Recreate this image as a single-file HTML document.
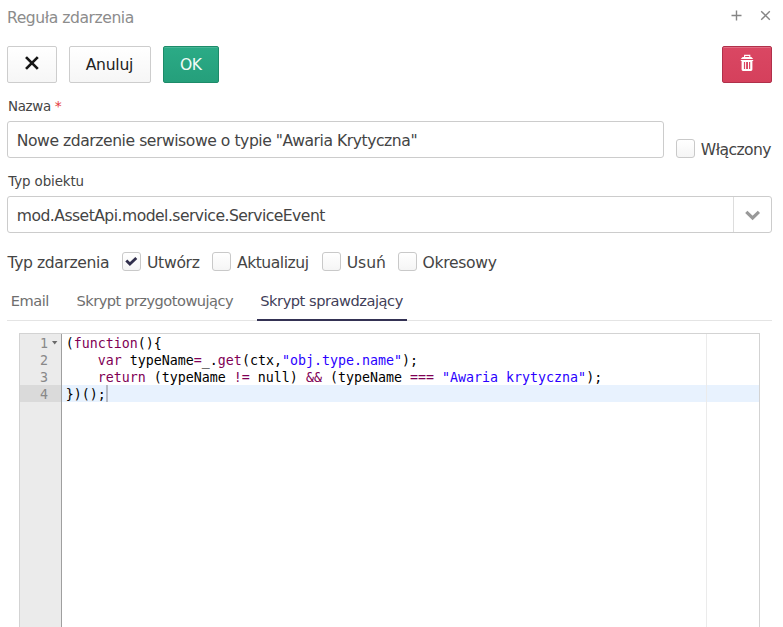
<!DOCTYPE html>
<html lang="pl">
<head>
<meta charset="utf-8">
<title>Reguła zdarzenia</title>
<style>
html,body{margin:0;padding:0;}
body{width:783px;height:627px;overflow:hidden;background:#fff;position:relative;font-family:"DejaVu Sans","Liberation Sans",sans-serif;color:#444;}
.abs{position:absolute;white-space:nowrap;}
.t{position:absolute;white-space:nowrap;line-height:20px;}
.btn{position:absolute;top:46px;height:35px;border:1px solid #cdcdcd;border-radius:2px;background:linear-gradient(#fff,#f6f6f6);}
.ok{background:linear-gradient(#2bab86,#259f7b);border-color:#1d8b69;box-shadow:inset 0 1px 0 rgba(255,255,255,.14);}
.del{background:linear-gradient(#da4763,#d5405c);border-color:#b0304a;box-shadow:inset 0 1px 0 rgba(255,255,255,.2);}
.inp{position:absolute;border:1px solid #ccc;border-radius:3px;background:#fff;box-sizing:border-box;}
.cb{position:absolute;width:17px;height:17px;border:1px solid #c9c9c9;border-radius:3px;background:linear-gradient(#fff,#f5f5f5);}
.ed{position:absolute;left:19px;top:333px;width:739px;height:300px;border:1px solid #d3d3d3;border-bottom:none;background:#fff;overflow:hidden;}
.gut{position:absolute;left:0;top:0;width:41px;height:100%;background:#ebebeb;border-right:1px solid #9f9f9f;}
.code{font-family:"DejaVu Sans Mono","Liberation Mono",monospace;font-size:13.3px;line-height:17px;color:#000;white-space:pre;}
.ln{position:absolute;left:0;width:28px;text-align:right;color:#888;}
.kw,.op{color:#7f0055;}.st{color:#2a00ff;}
</style>
</head>
<body>
<div id="title" class="t" style="left:7px;top:8.0px;font-size:15.6px;letter-spacing:-0.45px;color:#8c8c8c">Reguła zdarzenia</div>
<svg class="abs" style="left:730px;top:9px" width="44" height="14" viewBox="0 0 44 14"><path d="M6.500 1.500v10M1.500 6.500h10" stroke="#858585" stroke-width="1.400" fill="none"/><path d="M31.200 2.200l8.600 8.600M39.800 2.200l-8.600 8.600" stroke="#858585" stroke-width="1.350" fill="none"/></svg>

<div class="btn" style="left:7px;width:48px;"></div>
<svg class="abs" style="left:22px;top:53px" width="20" height="20" viewBox="22 53 20 20"><path d="M26 57.100l11.800 11.800M37.800 57.100l-11.800 11.800" stroke="#151515" stroke-width="2.700" fill="none"/></svg>
<div class="btn" style="left:69px;width:80px;"></div>
<div id="anuluj" class="t" style="left:85.7px;top:55.0px;font-size:15.6px;letter-spacing:-0.25px;color:#222">Anuluj</div>
<div class="btn ok" style="left:163px;width:54px;"></div>
<div id="ok" class="t" style="left:180.1px;top:55.0px;font-size:15.6px;letter-spacing:-0.6px;color:#f2fbf8">OK</div>
<div class="btn del" style="left:722px;width:48px;"></div>
<svg class="abs" style="left:738px;top:52px" width="18" height="22" viewBox="738 52 18 22"><path d="M744.600 57.200V55.400H749.800V57.200" stroke="#fff" stroke-width="1.100" fill="none"/><path d="M742.600 57h8.800l1.800 2h-12.400z" fill="#fff"/><path d="M740.800 60h12.400v1h-0.800v8.600a1.400 1.400 0 0 1 -1.400 1.400h-8a1.400 1.400 0 0 1 -1.400 -1.400v-8.600h-0.800z" fill="#fff"/><path d="M743.900 62h1.200v7h-1.200zM746.100 62h1.900v7h-1.900zM749 62h1.200v7h-1.200z" fill="#da4562"/></svg>

<div id="nazwa" class="t" style="left:8px;top:96.5px;font-size:13.4px;letter-spacing:-0.3px;color:#444">Nazwa</div>
<div class="t" id="star" style="left:54.7px;top:95.5px;font-size:14px;color:#e5393b">*</div>
<div class="inp" style="left:7px;top:121px;width:657px;height:37px;"></div>
<div id="input" class="t" style="left:16.8px;top:131.0px;font-size:15.6px;letter-spacing:-0.45px;color:#444">Nowe zdarzenie serwisowe o typie &quot;Awaria Krytyczna&quot;</div>
<div class="cb" style="left:676px;top:139px;"></div>
<div id="wlacz" class="t" style="left:700.8px;top:140.0px;font-size:15.6px;letter-spacing:-0.58px;color:#444">Włączony</div>

<div id="typob" class="t" style="left:8.2px;top:171.5px;font-size:13.4px;letter-spacing:-0.1px;color:#444">Typ obiektu</div>
<div class="inp" style="left:7px;top:196px;width:765px;height:37px;">
<div style="position:absolute;right:0;top:0;width:37px;height:100%;border-left:1px solid #ddd;"></div></div>
<svg class="abs" style="left:742px;top:206px" width="22" height="18" viewBox="742 206 22 18"><path d="M746.300 211.900L752.600 218L758.900 211.900" stroke="#999" stroke-width="3.200" fill="none"/></svg>
<div id="select" class="t" style="left:16.8px;top:206.0px;font-size:15.6px;letter-spacing:-0.53px;color:#444">mod.AssetApi.model.service.ServiceEvent</div>

<div id="typzd" class="t" style="left:7.5px;top:253.0px;font-size:15.6px;letter-spacing:-0.4px;color:#444">Typ zdarzenia</div>
<div class="cb" style="left:122px;top:252px;"></div>
<svg class="abs" style="left:122px;top:252px" width="19" height="19" viewBox="122 252 19 19"><path d="M126.300 260.500l3.600 3.600L136.300 258" stroke="#312f4c" stroke-width="2.800" fill="none"/></svg>
<div id="utw" class="t" style="left:147px;top:253.0px;font-size:15.6px;letter-spacing:-0.3px;color:#444">Utwórz</div>
<div class="cb" style="left:212px;top:252px;"></div>
<div id="akt" class="t" style="left:237px;top:253.0px;font-size:15.6px;letter-spacing:-0.48px;color:#444">Aktualizuj</div>
<div class="cb" style="left:322px;top:252px;"></div>
<div id="usun" class="t" style="left:346.8px;top:253.0px;font-size:15.6px;letter-spacing:-0.1px;color:#444">Usuń</div>
<div class="cb" style="left:398px;top:252px;"></div>
<div id="okr" class="t" style="left:422.5px;top:253.0px;font-size:15.6px;letter-spacing:-0.3px;color:#444">Okresowy</div>

<div id="email" class="t" style="left:10.8px;top:290.5px;font-size:14.6px;letter-spacing:-0.5px;color:#6e6e6e">Email</div>
<div id="przyg" class="t" style="left:76.5px;top:290.5px;font-size:14.6px;letter-spacing:-0.5px;color:#6e6e6e">Skrypt przygotowujący</div>
<div id="spr" class="t" style="left:260.3px;top:290.5px;font-size:14.6px;letter-spacing:-0.46px;color:#3f3e58">Skrypt sprawdzający</div>
<div class="abs" style="left:7px;top:320px;width:765px;height:1px;background:#e4e4e4;"></div>
<div class="abs" style="left:257px;top:319px;width:150px;height:2px;background:#343254;"></div>

<div class="ed">
  <div class="abs" style="left:0;top:51px;width:739px;height:17px;background:#e8f2fe;"></div>
  <div class="abs" style="left:686px;top:0;width:1px;height:100%;background:#ebebeb;"></div>
  <div class="gut"><div class="abs" style="left:0;top:51px;width:41px;height:17px;background:#dadada;"></div>
    <div class="code ln" style="top:1px">1</div><div class="code ln" style="top:18px">2</div><div class="code ln" style="top:35px">3</div><div class="code ln" style="top:52px">4</div>
    <svg class="abs" style="left:32px;top:7px" width="6" height="4" viewBox="0 0 6 4"><path d="M0 0h5.400L2.700 3.400z" fill="#6a6a6a"/></svg>
  </div>
  <div class="abs code" id="code" style="left:45.7px;top:1px;">(<span class="kw">function</span>(){
    <span class="kw">var</span> typeName<span class="op">=</span>_.<span class="kw">get</span>(ctx,<span class="st">"obj.type.name"</span>);
    <span class="kw">return</span> (typeName <span class="op">!=</span> null) <span class="op">&amp;&amp;</span> (typeName <span class="op">===</span> <span class="st">"Awaria krytyczna"</span>);
})();</div>
  <div class="abs" style="left:86px;top:51px;width:2px;height:17px;background:#b5bac4;"></div>
</div>
</body>
</html>
